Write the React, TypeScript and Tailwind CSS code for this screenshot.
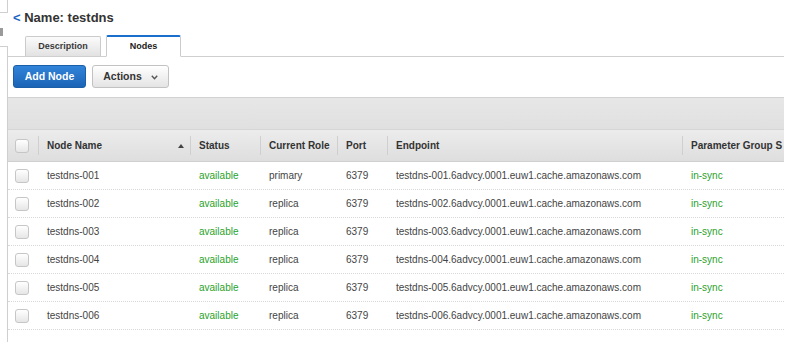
const nodes = [
  { name: 'testdns-001', role: 'primary' },
  { name: 'testdns-002', role: 'replica' },
  { name: 'testdns-003', role: 'replica' },
  { name: 'testdns-004', role: 'replica' },
  { name: 'testdns-005', role: 'replica' },
  { name: 'testdns-006', role: 'replica' },
];

const cols = 'grid grid-cols-[30px_152px_70px_77px_50px_295px_1fr]';

function Checkbox() {
  return (
    <span className="block w-[14px] h-[14px] rounded-[3px] border border-[#c6c6c6] bg-gradient-to-b from-white to-[#e6e6e6]" />
  );
}

function HeadCell({ label, sort }: { label: string; sort?: boolean }) {
  return (
    <div className="flex items-center h-full overflow-hidden whitespace-nowrap">
      <span className="w-px h-[19px] bg-[#cfcfcf] shrink-0" />
      <span className="ml-[8px] flex-1">{label}</span>
      {sort && (
        <span className="mr-[6px] w-0 h-0 border-l-[3px] border-r-[3px] border-b-[4px] border-transparent border-b-[#444]" />
      )}
    </div>
  );
}

export default function App() {
  return (
    <div className="w-[800px] h-[353px] bg-white overflow-hidden font-['Liberation_Sans',Arial,sans-serif] text-[#444]">
      <div className="flex items-start">
        {/* collapsed side panel edge */}
        <div className="w-[8px] flex flex-col self-stretch">
          <div className="h-[13px] border-b border-r border-[#cfcfcf]" />
          <div className="mt-[15px] w-[3px] h-[8px] bg-[#9a9a9a]" />
          <div className="mt-[10px] flex-1 border-t border-r border-[#cfcfcf]" />
        </div>

        <div className="w-[776px] pb-[12px]">
          <h1 className="pt-[9px] pl-[5px] text-[13px] leading-[18px] font-bold text-[#333]">
            <span className="text-[#1a66c2]">&lt;</span> Name: testdns
          </h1>

          <div className="mt-[8px] flex items-end h-[22px] pl-[17px] border-b border-[#cfcfcf]">
            <div className="w-[76px] h-[20px] flex items-center justify-center border border-b-0 border-[#cbcbcb] rounded-t-[2px] bg-gradient-to-b from-[#fbfbfb] to-[#e2e2e2] text-[9px] font-bold text-[#3a3a3a]">
              Description
            </div>
            <div className="ml-[5px] -mb-px w-[75px] h-[22px] flex items-center justify-center border border-[#cbcbcb] border-t-2 border-t-[#1a6ecc] border-b-white rounded-t-[2px] bg-white text-[9px] font-bold text-[#222]">
              Nodes
            </div>
          </div>

          <div className="mt-[8px] pl-[5px] flex gap-[6px]">
            <button className="w-[73px] h-[23px] rounded-[3px] border border-[#1b5fa9] bg-gradient-to-b from-[#3184da] to-[#1b64b6] text-white text-[10.5px] font-bold">
              Add Node
            </button>
            <button className="w-[77px] h-[23px] rounded-[3px] border border-[#c2c2c2] bg-gradient-to-b from-white to-[#e4e4e4] text-[#333] text-[10.5px] font-bold flex items-center justify-center gap-[9px]">
              Actions
              <svg width="7" height="5" viewBox="0 0 7 5" className="mt-px">
                <path d="M0.8 0.8 L3.5 3.8 L6.2 0.8" fill="none" stroke="#555" strokeWidth="1.4" />
              </svg>
            </button>
          </div>

          <div className="mt-[9px] h-[33px] border-t border-[#d2d2d2] bg-gradient-to-b from-[#e7e7e7] to-[#e0e0e0] border-b border-b-[#d6d6d6]" />

          <div className={`${cols} h-[32px] items-center bg-gradient-to-b from-[#ececec] to-[#dedede] border-b border-[#d0d0d0] text-[10px] font-bold text-[#333]`}>
            <div className="pl-[7px]">
              <Checkbox />
            </div>
            <HeadCell label="Node Name" sort />
            <HeadCell label="Status" />
            <HeadCell label="Current Role" />
            <HeadCell label="Port" />
            <HeadCell label="Endpoint" />
            <HeadCell label="Parameter Group S" />
          </div>

          {nodes.map((n) => (
            <div
              key={n.name}
              className={`${cols} h-[28px] items-center border-b border-dotted border-[#d8d8d8] text-[10px] whitespace-nowrap`}
            >
              <div className="pl-[7px]">
                <Checkbox />
              </div>
              <div className="pl-[9px]">{n.name}</div>
              <div className="pl-[9px] text-[#2aa22a]">available</div>
              <div className="pl-[9px]">{n.role}</div>
              <div className="pl-[9px]">6379</div>
              <div className="pl-[9px]">{n.name}.6advcy.0001.euw1.cache.amazonaws.com</div>
              <div className="pl-[9px] text-[#2aa22a]">in-sync</div>
            </div>
          ))}
        </div>
      </div>
    </div>
  );
}
